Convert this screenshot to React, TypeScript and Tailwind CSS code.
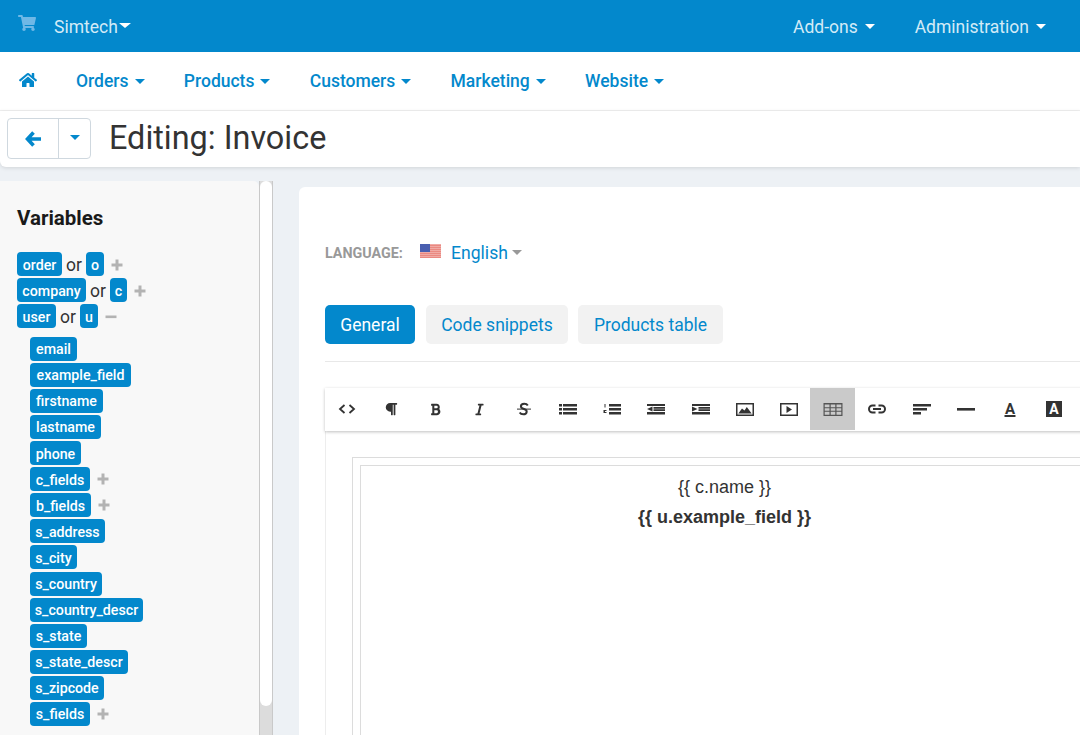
import React from "react";
import { FaShoppingCart, FaHome, FaBold, FaItalic, FaParagraph } from "react-icons/fa";

const Caret = ({ className = "" }: { className?: string }) => (
  <span className={`inline-block w-0 h-0 border-x-[5px] border-x-transparent border-t-[5px] ${className}`} />
);

const Badge = ({ children, w, pad = "pt-[1px]" }: { children: React.ReactNode; w: string; pad?: string }) => (
  <span className={`inline-flex items-center justify-center h-[24px] rounded-[4px] bg-[#0388cc] text-white text-[14.2px] font-medium leading-none ${pad} ${w}`}>{children}</span>
);

const Plus = () => (
  <svg width="12" height="12" viewBox="0 0 12 12" className="ml-[7px]"><path d="M4.500 .5h3v4h4v3h-4v4h-3v-4h-4v-3h4z" fill="#b3b3b3" /></svg>
);
const Minus = () => (
  <svg width="12" height="12" viewBox="0 0 12 12" className="ml-[7px]"><rect x=".5" y="4.500" width="11" height="2.600" fill="#b3b3b3" /></svg>
);

const Pair = ({ a, aw, b, bw, icon }: { a: string; aw: string; b: string; bw: string; icon: React.ReactNode }) => (
  <div className="flex items-center h-[26px]">
    <Badge w={aw} pad="pt-[2px]">{a}</Badge>
    <span className="mx-[4px] pt-[2px] text-[17.5px] text-[#333]">or</span>
    <Badge w={bw} pad="pt-[2px]">{b}</Badge>
    <span className="flex mt-[2px]">{icon}</span>
  </div>
);

const Ic = ({ children }: { children: React.ReactNode }) => (
  <svg width="20" height="20" viewBox="0 0 20 20" fill="#333">{children}</svg>
);

const tools: React.ReactNode[] = [
  <Ic><path d="M7.500 6 3 10l4.500 4M12.500 6 17 10l-4.500 4" fill="none" stroke="#333" strokeWidth="1.800" /></Ic>,
  <FaParagraph size={14} color="#333" />,
  <FaBold size={13} color="#333" />,
  <FaItalic size={13} color="#333" />,
  <Ic><path d="M13.800 6.500C13.100 5.300 11.700 4.800 10.300 4.800 8.300 4.800 6.900 5.800 6.900 7.300 6.900 8.800 8.100 9.400 10 10 11.800 10.600 12.900 11.300 12.700 12.800 12.500 14.300 11.200 15.300 9.300 15.300 7.700 15.300 6.400 14.700 5.700 13.500" fill="none" stroke="#333" strokeWidth="2" /><rect x="3" y="9.600" width="14" height="1" /></Ic>,
  <Ic><path d="M1 5h3v2.500H1zM1 9h3v2.500H1zM1 13h3v2.500H1zM5 5h14v2.500H5zM5 9h14v2.500H5zM5 13h14v2.500H5z" /></Ic>,
  <Ic><path d="M7 5h12v2.500H7zM7 9h12v2.500H7zM7 13h12v2.500H7zM2.500 5h1v3.500h-1zM1.500 11h3v1H3v1h1.500v1h-3z" /></Ic>,
  <Ic><path d="M1 5h18v2H1zM7.500 8H19v1.700H7.500zM7.500 10.300H19V12H7.500zM1 13h18v2.500H1zM6.500 7.500v5L1 10z" /></Ic>,
  <Ic><path d="M1 5h18v2H1zM7.500 8H19v1.700H7.500zM7.500 10.300H19V12H7.500zM1 13h18v2.500H1zM1 7.500v5L6.500 10z" /></Ic>,
  <Ic><path d="M1 4h18v13H1zM2.500 5.500v10h15v-10z" fillRule="evenodd" /><path d="M3.300 14.500l3.700-5 2.500 2 2.300-3.500 4.900 6.500z" /></Ic>,
  <Ic><path d="M1 4h18v13H1zM2.500 5.500v10h15v-10z" fillRule="evenodd" /><path d="M7.500 7v7l5.500-3.500z" /></Ic>,
  <Ic><path d="M.5 4h19v13H.5zM1.700 5.400v2.800h4.800V5.400zM7.700 5.400v2.800h4.600V5.400zM13.500 5.400v2.800h4.800V5.400zM1.700 9.300v2.400h4.800V9.300zM7.700 9.300v2.400h4.600V9.300zM13.500 9.300v2.400h4.800V9.300zM1.700 12.800v3h4.800v-3zM7.700 12.800v3h4.600v-3zM13.500 12.800v3h4.800v-3z" fillRule="evenodd" fill="#555" /></Ic>,
  <Ic><path d="M8.500 6.500H5.500a3.500 3.500 0 0 0 0 7h3M11.500 6.500h3a3.500 3.500 0 0 1 0 7h-3M6 10h8" fill="none" stroke="#333" strokeWidth="2" /></Ic>,
  <Ic><path d="M1 5h18v2.500H1zM1 9h14v2.500H1zM1 13h8v2.500H1z" /></Ic>,
  <Ic><rect x="1" y="9" width="18" height="2.600" /></Ic>,
  <Ic><text x="10" y="15" textAnchor="middle" fontFamily="Roboto, sans-serif" fontWeight="700" fontSize="15">A</text><rect x="4.500" y="16" width="11" height="2" /></Ic>,
  <Ic><rect x="2" y="2" width="16" height="16" /><text x="10" y="15" textAnchor="middle" fontFamily="Roboto, sans-serif" fontWeight="700" fontSize="14" fill="#fff">A</text></Ic>,
];

const subs: [string, string, boolean][] = [
  ["email", "w-[47px]", false], ["example_field", "w-[101px]", false], ["firstname", "w-[73px]", false], ["lastname", "w-[71px]", false], ["phone", "w-[51px]", false],
  ["c_fields", "w-[60px]", true], ["b_fields", "w-[61px]", true], ["s_address", "w-[75px]", false], ["s_city", "w-[47px]", false], ["s_country", "w-[72px]", false],
  ["s_country_descr", "w-[113px]", false], ["s_state", "w-[57px]", false], ["s_state_descr", "w-[98px]", false], ["s_zipcode", "w-[74px]", false], ["s_fields", "w-[60px]", true],
];

const navItems = ["Orders", "Products", "Customers", "Marketing", "Website"];

export default function App() {
  return (
    <div className="w-[1080px] h-[735px] overflow-hidden bg-[#edf1f5] flex flex-col font-['Roboto',sans-serif] text-[#333]">
      <header className="h-[52px] shrink-0 bg-[#0388cc] flex items-center pl-[18px] pr-[34px] pt-[3px] text-[17.5px] text-[#d3ebf7]">
        <FaShoppingCart size={18} className="text-[#6fb8e6] -mt-[9px]" />
        <span className="ml-[18px] flex items-center gap-[1px]">Simtech<Caret className="border-t-white -mt-[4px] border-x-[6px]" /></span>
        <span className="ml-auto flex items-center gap-[7px]">Add-ons<Caret className="border-t-white -mt-[3px]" /></span>
        <span className="ml-[40px] flex items-center gap-[7px]">Administration<Caret className="border-t-white -mt-[3px]" /></span>
      </header>
      <nav className="h-[59px] shrink-0 bg-white border-b border-[#f0f0f0] flex items-center pl-[19px] text-[17.5px] font-medium text-[#0388cc]">
        <FaHome size={18} className="mr-[39px] -mt-[2px]" />
        {navItems.map((n) => (
          <span key={n} className="flex items-center gap-[6px] mr-[39.300px]">{n}<Caret className="border-t-[#0388cc]" /></span>
        ))}
      </nav>
      <div className="h-[56px] shrink-0 bg-white shadow-[0_1px_4px_rgba(0,0,0,0.12)] rounded-bl-[6px] flex items-center pl-[7px] relative">
        <div className="flex h-[41px] w-[84px] border border-[#cfd8df] rounded-[4px] -mt-[1px]">
          <div className="w-[51px] flex items-center justify-center border-r border-[#cfd8df]">
            <svg width="18" height="18" viewBox="0 0 18 18"><path d="M9.500 2.500 3.500 9l6 6.500M5 9h12" fill="none" stroke="#0388cc" strokeWidth="3.600" /></svg>
          </div>
          <div className="flex-1 flex items-center justify-center"><Caret className="border-t-[#0388cc] -mt-[2px]" /></div>
        </div>
        <h1 className="ml-[18px] text-[32.400px] font-normal leading-none text-[#333] -mt-[2px]">Editing: Invoice</h1>
      </div>
      <div className="flex flex-1 min-h-0">
        <aside className="w-[259px] shrink-0 mt-[14px] bg-[#f8f8f8] rounded-tr-[6px] pl-[17px] pt-[25px]">
          <h2 className="text-[20.5px] font-bold leading-[24px] text-[#1a1a1a] mb-[21px]">Variables</h2>
          <Pair a="order" aw="w-[45px]" b="o" bw="w-[18px]" icon={<Plus />} />
          <Pair a="company" aw="w-[69px]" b="c" bw="w-[17px]" icon={<Plus />} />
          <Pair a="user" aw="w-[39px]" b="u" bw="w-[18px]" icon={<Minus />} />
          <div className="pl-[13px] mt-[6.700px]">
            {subs.map(([s, w, p]) => (
              <div key={s} className="flex items-center h-[26.100px]"><Badge w={w}>{s}</Badge>{p && <Plus />}</div>
            ))}
          </div>
        </aside>
        <div className="w-[14px] shrink-0 mt-[14px] bg-[#dcdcdc] border-x border-[#c9c9c9] relative">
          <div className="absolute inset-x-0 top-0 h-[525px] bg-white rounded-full" />
        </div>
        <main className="ml-[26px] mt-[20px] flex-1 min-w-0 bg-white rounded-tl-[6px] pl-[26px] overflow-hidden">
          <div className="flex items-center mt-[51px] h-[30px]">
            <span className="text-[14.300px] font-bold text-[#999] w-[95px] pt-[1px]">LANGUAGE:</span>
            <svg width="21" height="15" viewBox="0 0 21 15" className="-mt-[4px]">
              <rect width="21" height="15" fill="#fff" />
              {[0, 2, 4, 6, 8, 10, 12].map((y) => <rect key={y} y={y + 0.5} width="21" height="1.200" fill="#e2574c" />)}
              <rect width="10" height="8" fill="#4a5fb0" />
            </svg>
            <span className="ml-[10px] text-[17.600px] text-[#0388cc]">English</span>
            <Caret className="ml-[4px] border-t-[#999] -mt-[2px]" />
          </div>
          <div className="flex gap-[11px] mt-[37px] pb-[17px] border-b border-[#e8e8e8] text-[17.500px]">
            <span className="h-[39px] w-[90px] pt-[1px] flex items-center justify-center rounded-[5px] bg-[#0388cc] text-white">General</span>
            <span className="h-[39px] w-[142px] pt-[1px] flex items-center justify-center rounded-[5px] bg-[#f2f2f2] text-[#0388cc]">Code snippets</span>
            <span className="h-[39px] w-[145px] pt-[1px] -ml-[1px] flex items-center justify-center rounded-[5px] bg-[#f2f2f2] text-[#0388cc]">Products table</span>
          </div>
          <div className="mt-[26px] w-[900px]">
            <div className="h-[43px] flex bg-white shadow-[0_1px_3px_rgba(0,0,0,0.25)] relative">
              {tools.map((t, i) => (
                <div key={i} className={`h-[42px] shrink-0 flex items-center justify-center ${i === 11 ? "w-[45.200px] -ml-[1px] bg-[#cacaca]" : "w-[44.200px]"}`}>{t}</div>
              ))}
            </div>
            <div className="pl-[26px] pt-[26px] border-l border-[#ededed]">
              <div className="border border-[#dcdcdc] p-[7px] w-[800px] h-[400px]">
                <div className="border border-[#dcdcdc] h-full w-[729px] text-center font-['Liberation_Sans',sans-serif] text-[18px] text-[#333]">
                  <p className="leading-[20px] mt-[11px]">{"{{ c.name }}"}</p>
                  <p className="leading-[20px] mt-[10px] font-bold">{"{{ u.example_field }}"}</p>
                </div>
              </div>
            </div>
          </div>
        </main>
      </div>
    </div>
  );
}
